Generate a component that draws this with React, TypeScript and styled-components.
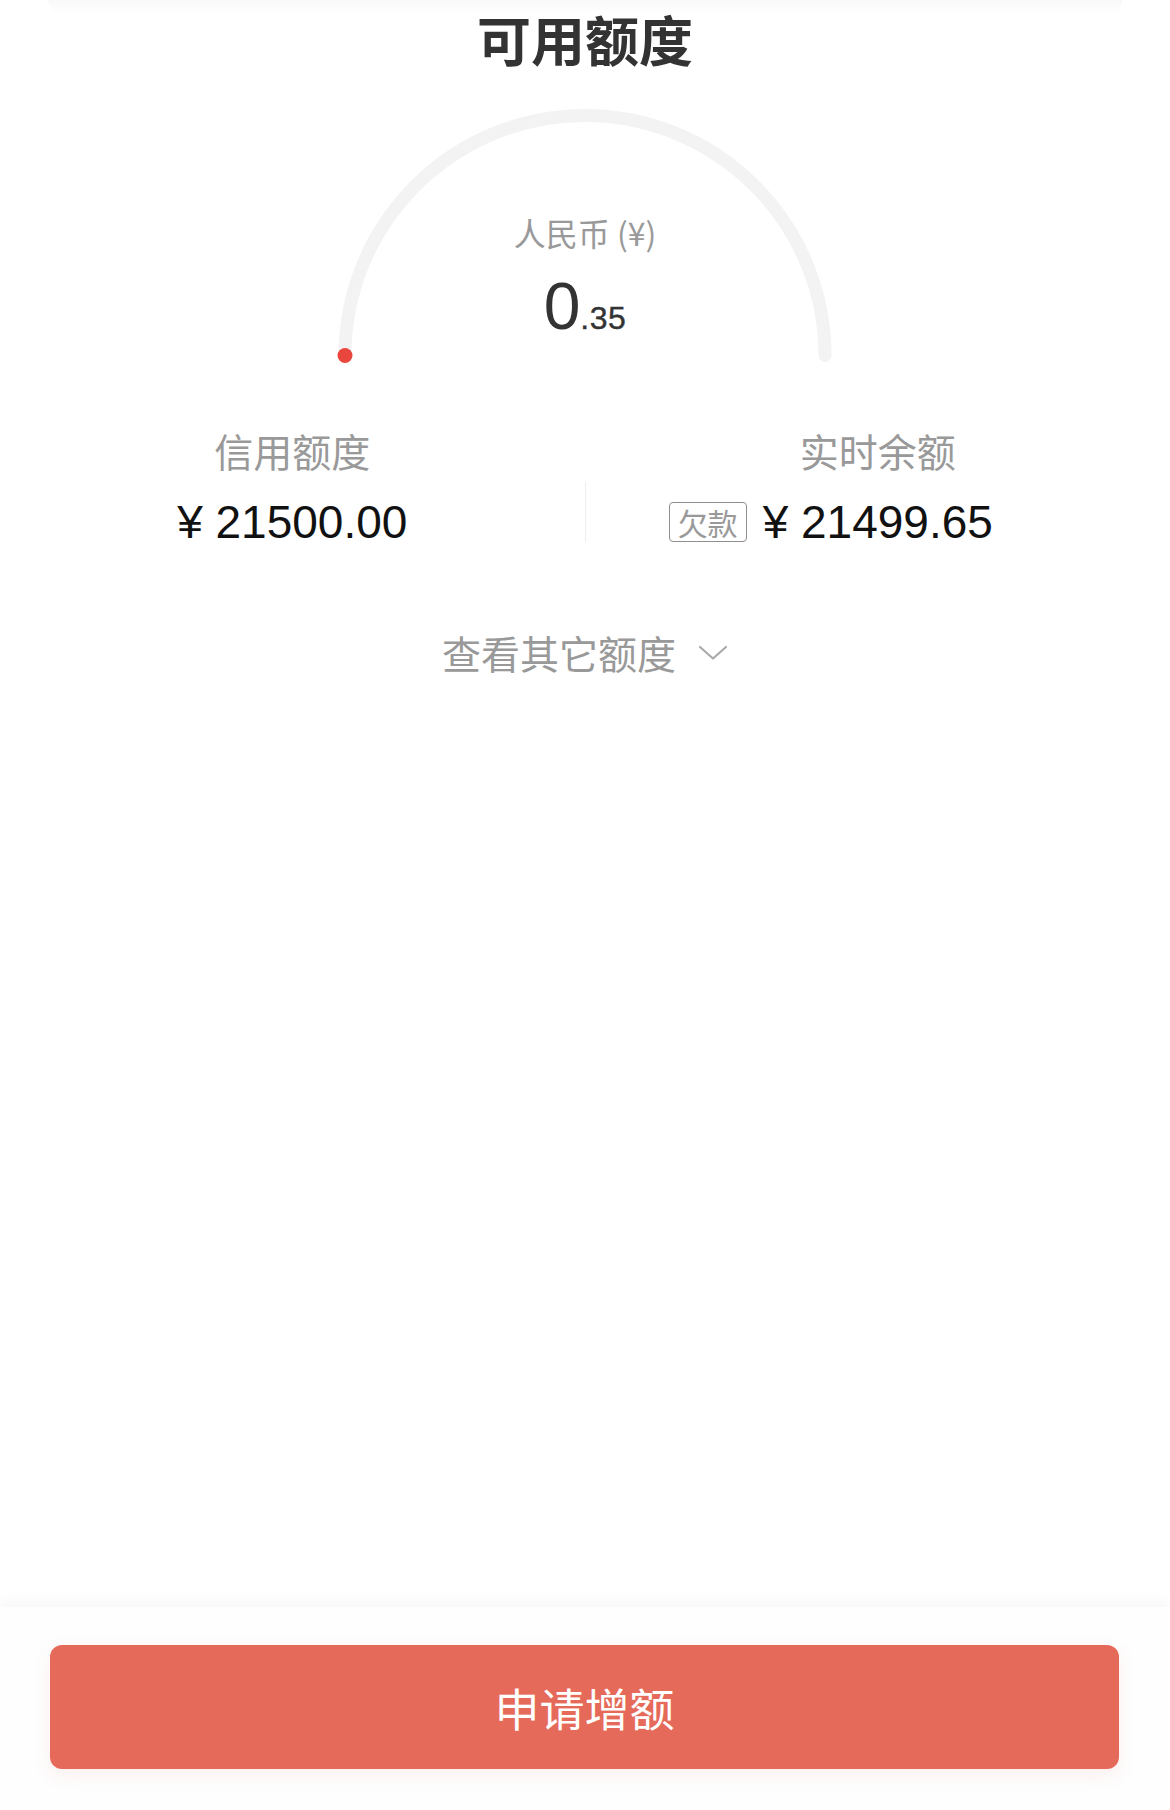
import React from 'react';
import styled, { createGlobalStyle } from 'styled-components';

const GlobalStyle = createGlobalStyle`
  html, body {
    margin: 0;
    padding: 0;
    background: #ffffff;
  }
  body {
    font-family: "Noto Sans CJK SC", "Noto Sans", sans-serif;
    -webkit-font-smoothing: antialiased;
  }
`;

const Page = styled.div`
  position: relative;
  min-height: 100vh;
  display: flex;
  flex-direction: column;
  align-items: stretch;
  background: #ffffff;
`;

// faint edge of the card that sits above this screen
const TopShade = styled.div`
  position: absolute;
  top: 0;
  left: 48px;
  right: 48px;
  height: 14px;
  background: linear-gradient(#f9f9f9, rgba(255, 255, 255, 0));
  border-radius: 0 0 20px 20px;
`;

const Title = styled.h1`
  margin: 0;
  padding-top: 12px;
  text-align: center;
  font-size: 54px;
  line-height: 54px;
  font-weight: 700;
  color: #333333;
`;

const Gauge = styled.div`
  position: relative;
  width: 500px;
  height: 270px;
  margin: 34px auto 0;
  display: flex;
  flex-direction: column;
  align-items: center;
  padding-top: 116px;
  box-sizing: border-box;
`;

const GaugeArc = styled.svg`
  position: absolute;
  inset: 0;
  width: 500px;
  height: 270px;
`;

const Currency = styled.div`
  position: relative;
  font-size: 32px;
  line-height: 32px;
  color: #999999;
`;

const Amount = styled.div`
  position: relative;
  margin-top: 26px;
  font-family: "Liberation Sans", Arial, sans-serif;
  font-size: 66px;
  line-height: 64px;
  color: #333333;
`;

const Cents = styled.span`
  font-size: 32px;
  line-height: 1;
  letter-spacing: 0.5px;
  -webkit-text-stroke: 0.4px #333333;
`;

const StatRow = styled.div`
  display: grid;
  grid-template-columns: 1fr 1px 1fr;
  margin-top: 61px;
`;

const Stat = styled.div`
  display: flex;
  flex-direction: column;
  align-items: center;
`;

const StatLabel = styled.div`
  font-size: 39px;
  line-height: 38px;
  color: #999999;
`;

const StatValue = styled.div`
  position: relative;
  margin-top: 30px;
  font-family: "Liberation Sans", Arial, sans-serif;
  font-size: 46px;
  line-height: 46px;
  color: #111111;
  white-space: pre;
`;

const Tag = styled.span`
  position: absolute;
  right: calc(100% + 16px);
  top: 50%;
  transform: translateY(-50%);
  font-family: "Noto Sans CJK SC", sans-serif;
  font-size: 30px;
  line-height: 38px;
  padding: 0 8px;
  color: #999999;
  border: 1px solid #8e8e8e;
  border-radius: 4px;
  white-space: nowrap;
`;

const Divider = styled.div`
  align-self: end;
  height: 60px;
  margin-bottom: 3px;
  background: #eeeeee;
`;

const MoreToggle = styled.button`
  align-self: center;
  margin-top: 88px;
  display: flex;
  align-items: center;
  gap: 22px;
  padding: 0;
  border: none;
  background: none;
  font-family: inherit;
  font-size: 39px;
  line-height: 39px;
  color: #999999;
  cursor: pointer;
`;

const Spacer = styled.div`
  flex: 1;
`;

const BottomBar = styled.div`
  height: 203px;
  box-sizing: border-box;
  padding: 38px 51px 41px 50px;
  background: #fefefe;
  box-shadow: 0 -6px 14px rgba(0, 0, 0, 0.035);
`;

const ApplyButton = styled.button`
  width: 100%;
  height: 124px;
  border: none;
  border-radius: 12px;
  background: #e66a5a;
  box-shadow: 0 6px 18px rgba(230, 106, 90, 0.1);
  color: #ffffff;
  font-family: inherit;
  font-size: 45px;
  line-height: 45px;
  cursor: pointer;
`;

const ChevronDown = () => (
  <svg width="30" height="16" viewBox="0 0 30 16" fill="none">
    <path d="M2 2 L15 13.5 L28 2" stroke="#aaaaaa" strokeWidth="2.2" strokeLinecap="round" strokeLinejoin="round" />
  </svg>
);

const App: React.FC = () => {
  return (
    <Page>
      <GlobalStyle />
      <TopShade />
      <Title>可用额度</Title>

      <Gauge>
        <GaugeArc viewBox="0 0 500 270">
          <path
            d="M 10 255.5 A 240 240 0 0 1 490 255.5"
            stroke="#f3f3f3"
            strokeWidth="13"
            strokeLinecap="round"
            fill="none"
          />
          <circle cx="10" cy="255.5" r="7.5" fill="#e9473d" />
        </GaugeArc>
        <Currency>人民币 (¥)</Currency>
        <Amount>
          0<Cents>.35</Cents>
        </Amount>
      </Gauge>

      <StatRow>
        <Stat>
          <StatLabel>信用额度</StatLabel>
          <StatValue>¥ 21500.00</StatValue>
        </Stat>
        <Divider />
        <Stat>
          <StatLabel>实时余额</StatLabel>
          <StatValue>
            <Tag>欠款</Tag>¥ 21499.65
          </StatValue>
        </Stat>
      </StatRow>

      <MoreToggle>
        查看其它额度
        <ChevronDown />
      </MoreToggle>

      <Spacer />

      <BottomBar>
        <ApplyButton>申请增额</ApplyButton>
      </BottomBar>
    </Page>
  );
};

export default App;
